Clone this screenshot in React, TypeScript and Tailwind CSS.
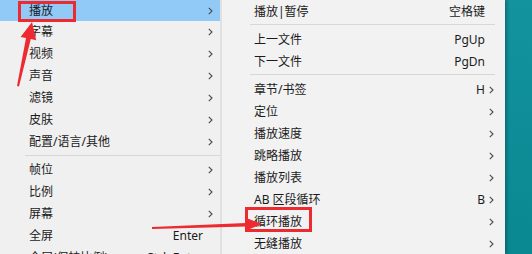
import React from "react";

type Item =
  | { sep: true }
  | { label: string; key?: string; sub?: boolean; active?: boolean; sep?: false };

const leftItems: Item[] = [
  { label: "播放", sub: true, active: true },
  { label: "字幕", sub: true },
  { label: "视频", sub: true },
  { label: "声音", sub: true },
  { label: "滤镜", sub: true },
  { label: "皮肤", sub: true },
  { label: "配置/语言/其他", sub: true },
  { sep: true },
  { label: "帧位", sub: true },
  { label: "比例", sub: true },
  { label: "屏幕", sub: true },
  { label: "全屏", key: "Enter" },
  { label: "全屏(保持比例)", key: "Ctrl+Enter" },
];

const rightItems: Item[] = [
  { label: "播放|暂停", key: "空格键" },
  { sep: true },
  { label: "上一文件", key: "PgUp" },
  { label: "下一文件", key: "PgDn" },
  { sep: true },
  { label: "章节/书签", key: "H", sub: true },
  { label: "定位", sub: true },
  { label: "播放速度", sub: true },
  { label: "跳略播放", sub: true },
  { label: "播放列表", sub: true },
  { label: "AB 区段循环", key: "B", sub: true },
  { label: "循环播放", sub: true },
  { label: "无缝播放", sub: true },
];

function Chevron() {
  return (
    <svg width="5" height="8" viewBox="0 0 5 8" className="block">
      <polyline points="0.8,0.8 4,4 0.8,7.2" fill="none" stroke="#4a4a4a" strokeWidth="1.1" />
    </svg>
  );
}

function Menu({ items, left }: { items: Item[]; left: boolean }) {
  return (
    <div className={left ? "flex flex-col" : "flex flex-col pt-[1px]"}>
      {items.map((it, i) => {
        if (it.sep) {
          return (
            <div key={i} className={left ? "h-[6px] pl-[25px] pt-[2px]" : "h-[6px] pl-[28px] pr-[10px] pt-[1px]"}>
              <div className="h-px bg-[#d7d7d7]" />
            </div>
          );
        }
        const first = left && i === 0;
        return (
          <div
            key={i}
            className={
              (first ? "h-[21px] " : "h-[22px] ") +
              (it.active ? "bg-[#91c9f7] " : "") +
              (left ? "pl-[29px] pr-[7px] " : "pl-[32px] pr-[11px] ") +
              "flex items-center text-[12px] text-[#1b1b1b]"
            }
          >
            <span className="flex-1 whitespace-nowrap">{it.label}</span>
            {it.key && <span className="whitespace-nowrap">{it.key}</span>}
            <span className={left ? "w-[10px] flex justify-end" : "w-[9px] flex justify-end"}>
              {it.sub && <Chevron />}
            </span>
          </div>
        );
      })}
    </div>
  );
}

export default function App() {
  return (
    <div
      className="relative w-[532px] h-[254px] overflow-hidden flex bg-gradient-to-b from-[#12939e] to-[#0a8892] leading-none"
      style={{ fontFamily: '"Noto Sans", "Noto Sans CJK SC", sans-serif' }}
    >
      <div className="w-[220px] shrink-0 bg-[#f0f0f0]">
        <Menu items={leftItems} left />
      </div>
      <div className="w-[2px] shrink-0 bg-[#e2e2e2]" />
      <div className="w-[283px] shrink-0 bg-[#f2f2f2] shadow-[2px_0_3px_rgba(0,0,0,0.25)]">
        <Menu items={rightItems} left={false} />
      </div>

      {/* red annotations */}
      <div className="absolute left-[18px] top-[1px] w-[58px] h-[21px] border-[3px] border-[#ec2a2f]" />
      <div className="absolute left-[245px] top-[207px] w-[67px] h-[25px] border-[3px] border-[#ec2a2f]" />
      <svg className="absolute left-0 top-0" width="532" height="254" viewBox="0 0 532 254">
        <polygon
          points="32,22 36.2,40.3 30.8,39 19,86.4 17,86 26,38 20.6,36.9"
          fill="#ec2a2f"
        />
        <polygon
          points="262,224 245,231 246,226.5 152,229 152,227 246,223 245,217.5"
          fill="#ec2a2f"
        />
      </svg>
    </div>
  );
}
